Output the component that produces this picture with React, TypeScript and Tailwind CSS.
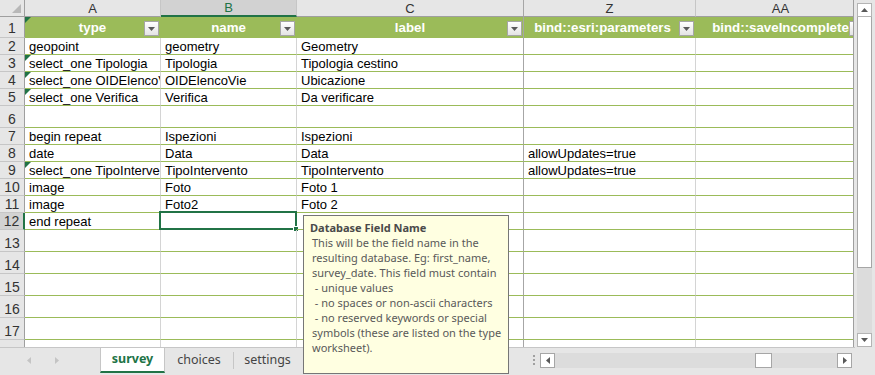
import React from 'react';

interface RowData {
  n: number;
  h: string;
  cells?: string[];
  flag?: boolean;
  selected?: boolean;
}

const rows: RowData[] = [
  { n: 2, h: 'h-[17px]', cells: ['geopoint', 'geometry', 'Geometry'] },
  { n: 3, h: 'h-[17px]', cells: ['select_one Tipologia', 'Tipologia', 'Tipologia cestino'], flag: true },
  { n: 4, h: 'h-[17px]', cells: ['select_one OIDElencoVie', 'OIDElencoVie', 'Ubicazione'], flag: true },
  { n: 5, h: 'h-[17px]', cells: ['select_one Verifica', 'Verifica', 'Da verificare'], flag: true },
  { n: 6, h: 'h-[22px]' },
  { n: 7, h: 'h-[17px]', cells: ['begin repeat', 'Ispezioni', 'Ispezioni'] },
  { n: 8, h: 'h-[17px]', cells: ['date', 'Data', 'Data', 'allowUpdates=true'] },
  { n: 9, h: 'h-[17px]', cells: ['select_one TipoIntervento', 'TipoIntervento', 'TipoIntervento', 'allowUpdates=true'], flag: true },
  { n: 10, h: 'h-[17px]', cells: ['image', 'Foto', 'Foto 1'] },
  { n: 11, h: 'h-[17px]', cells: ['image', 'Foto2', 'Foto 2'] },
  { n: 12, h: 'h-[17px]', cells: ['end repeat'], selected: true },
  { n: 13, h: 'h-[22px]' },
  { n: 14, h: 'h-[22px]' },
  { n: 15, h: 'h-[22px]' },
  { n: 16, h: 'h-[22px]' },
  { n: 17, h: 'h-[22px]' },
  { n: 18, h: 'h-[22px]' },
];

// larghezze colonne A, B, C, Z, AA
const colW = ['w-[136px]', 'w-[136px]', 'w-[227px]', 'w-[172px]', 'w-[170px]'];
const colLine = ['border-r-[#d4d4d4]', 'border-r-[#d4d4d4]', 'border-r-[#a6a6a6]', 'border-r-[#d4d4d4]', 'border-r-[#d4d4d4]'];
const letters = ['A', 'B', 'C', 'Z', 'AA'];
const headers = ['type', 'name', 'label', 'bind::esri:parameters', 'bind::saveIncomplete'];

const tipLines = [
  'This will be the field name in the',
  'resulting database. Eg: first_name,',
  'survey_date. This field must contain',
  ' - unique values',
  ' - no spaces or non-ascii characters',
  ' - no reserved keywords or special',
  'symbols (these are listed on the type',
  'worksheet).',
];

const Flag = () => (
  <span className="absolute left-0 top-0 w-0 h-0 border-t-[6px] border-t-[#217346] border-r-[6px] border-r-transparent" />
);

const DropButton = () => (
  <span className="absolute right-[1px] top-[4px] w-[15px] h-[15px] bg-gradient-to-b from-white to-[#e4e4e4] border border-[#a6a6a6] flex items-center justify-center">
    <svg width="7" height="4" viewBox="0 0 7 4">
      <path d="M0 0h7L3.5 4z" fill="#5a5a5a" />
    </svg>
  </span>
);

const Arrow = ({ dir, color = '#7a7a7a' }: { dir: 'up' | 'down' | 'left' | 'right'; color?: string }) => {
  const d = {
    up: 'M0 4h7L3.5 0z',
    down: 'M0 0h7L3.5 4z',
    left: 'M4 0v7L0 3.5z',
    right: 'M0 0v7L4 3.5z',
  }[dir];
  const horiz = dir === 'up' || dir === 'down';
  return (
    <svg width={horiz ? 7 : 4} height={horiz ? 4 : 7} viewBox={horiz ? '0 0 7 4' : '0 0 4 7'}>
      <path d={d} fill={color} />
    </svg>
  );
};

const App: React.FC = () => {
  return (
    <div className="w-[875px] h-[375px] bg-[#e6e6e6] flex relative overflow-hidden font-['Liberation_Sans',Arial,sans-serif] text-black">
      <div className="w-[855px] flex flex-col">
        {/* griglia */}
        <div className="w-[854px] h-[347px] border-r border-r-[#9f9f9f] overflow-hidden bg-white">
          {/* lettere colonne */}
          <div className="flex h-[17px] w-max">
            <div className="relative w-[25px] shrink-0 bg-[#e6e6e6] border-r border-r-[#9f9f9f] border-b border-b-[#9f9f9f]">
              <span className="absolute right-[3px] bottom-[3px] w-0 h-0 border-b-[9px] border-b-[#b8b8b8] border-l-[9px] border-l-transparent" />
            </div>
            {letters.map((l, i) => (
              <div
                key={l}
                className={`${colW[i]} shrink-0 flex items-center justify-center text-[13px] leading-none border-r ${i === 2 ? 'border-r-[#a6a6a6]' : 'border-r-[#c6c6c6]'} ${
                  i === 1
                    ? 'bg-[#d2d2d2] text-[#217346] border-b-2 border-b-[#217346]'
                    : 'bg-[#e6e6e6] text-[#333] border-b border-b-[#9f9f9f]'
                }`}
              >
                {l}
              </div>
            ))}
          </div>

          {/* riga 1: intestazioni tabella */}
          <div className="flex h-[21px] w-max">
            <div className="w-[25px] shrink-0 bg-[#e6e6e6] border-r border-r-[#9f9f9f] border-b border-b-[#c6c6c6] flex items-end justify-center text-[14px] leading-[17px] text-[#333]">
              1
            </div>
            {headers.map((h, i) => (
              <div
                key={h}
                className={`relative ${colW[i]} shrink-0 bg-[#9bbb59] border-r ${i === 2 ? 'border-r-[#a6a6a6]' : 'border-r-[#9bbb59]'} flex items-center justify-center ${i === 3 ? 'pr-[14px]' : ''} text-white font-bold text-[13.3px] whitespace-nowrap overflow-hidden`}
              >
                {i === 0 && <Flag />}
                {h}
                <DropButton />
              </div>
            ))}
          </div>

          {rows.map(r => (
            <div key={r.n} className={`flex ${r.h} w-max`}>
              <div
                className={`w-[25px] shrink-0 border-b border-b-[#c6c6c6] flex items-end justify-center text-[14px] leading-[16px] text-[#333] ${
                  r.selected ? 'bg-[#d2d2d2] border-r-2 border-r-[#217346]' : 'bg-[#e6e6e6] border-r border-r-[#9f9f9f]'
                }`}
              >
                {r.n}
              </div>
              {colW.map((w, i) => (
                <div
                  key={i}
                  className={`relative ${w} shrink-0 border-r ${colLine[i]} border-b border-b-[#9bbb59] pl-[4px] pr-[2px] flex items-end text-[13px] leading-[15px] whitespace-nowrap ${r.selected && i === 1 ? '' : 'overflow-hidden'}`}
                >
                  {i === 0 && r.flag && <Flag />}
                  {r.cells?.[i] ?? ''}
                  {r.selected && i === 1 && (
                    <span className="absolute -left-[2px] -top-[2px] -right-[1px] -bottom-[1px] border-2 border-[#217346]">
                      <span className="absolute -right-[4px] -bottom-[4px] w-[6px] h-[6px] bg-[#217346] border border-white" />
                    </span>
                  )}
                </div>
              ))}
            </div>
          ))}
        </div>

        {/* barra fogli */}
        <div className="h-[28px] border-t border-t-[#c6c6c6] flex items-start font-['Noto_Sans',sans-serif]">
          <div className="w-[100px] h-[24px] flex items-center gap-[24px] pl-[27px]">
            <Arrow dir="left" color="#c4c4c4" />
            <Arrow dir="right" color="#c4c4c4" />
          </div>
          <div className="w-[65px] h-[25px] bg-white border-x border-x-[#c6c6c6] border-b-2 border-b-[#217346] flex items-center justify-center text-[12.5px] font-bold text-[#217346]">
            survey
          </div>
          <div className="w-[68px] h-[24px] flex items-center justify-center text-[12.5px] text-[#444]">choices</div>
          <div className="w-px h-[17px] mt-[4px] bg-[#c6c6c6]" />
          <div className="w-[67px] h-[24px] flex items-center justify-center text-[12.5px] text-[#444]">settings</div>
          <div className="w-[223px]" />
          <div className="w-[16px] h-[24px] flex flex-col items-center justify-center gap-[2px] pl-[4px]">
            <span className="w-[2px] h-[2px] bg-[#a0a0a0]" />
            <span className="w-[2px] h-[2px] bg-[#a0a0a0]" />
            <span className="w-[2px] h-[2px] bg-[#a0a0a0]" />
          </div>
          <div className="w-[312px] h-[15px] mt-[5px] flex bg-[#dcdcdc]">
            <div className="w-[15px] h-[15px] bg-white border border-[#a6a6a6] flex items-center justify-center">
              <Arrow dir="left" color="#595959" />
            </div>
            <div className="w-[200px]" />
            <div className="w-[17px] h-[15px] bg-white border border-[#a6a6a6]" />
            <div className="flex-1" />
            <div className="w-[15px] h-[15px] bg-white border border-[#a6a6a6] flex items-center justify-center">
              <Arrow dir="right" color="#595959" />
            </div>
          </div>
        </div>
      </div>

      {/* barra di scorrimento verticale */}
      <div className="w-[20px] pl-[2px] pt-[3px]">
        <div className="w-[15px] h-[344px] flex flex-col bg-[#dcdcdc]">
          <div className="h-[14px] bg-white border border-[#b4b4b4] flex items-center justify-center">
            <Arrow dir="up" color="#595959" />
          </div>
          <div className="h-[251px] bg-white border border-[#a6a6a6] border-t-0" />
          <div className="flex-1" />
          <div className="h-[14px] bg-white border border-[#b4b4b4] flex items-center justify-center">
            <Arrow dir="down" color="#595959" />
          </div>
        </div>
      </div>

      {/* messaggio di input */}
      <div className="absolute left-[303px] top-[215px] w-[206px] h-[159px] bg-[#ffffe1] border border-[#767676] pl-[6px] pt-[4px] font-['Noto_Sans',sans-serif] text-[11px] leading-[15px] text-[#595959]">
        <div className="font-bold text-[#4a4a4a]">Database Field Name</div>
        <div className="pl-[2px]">
          {tipLines.map((l, i) => (
            <div key={i} className="whitespace-pre">
              {l}
            </div>
          ))}
        </div>
      </div>
    </div>
  );
};

export default App;
